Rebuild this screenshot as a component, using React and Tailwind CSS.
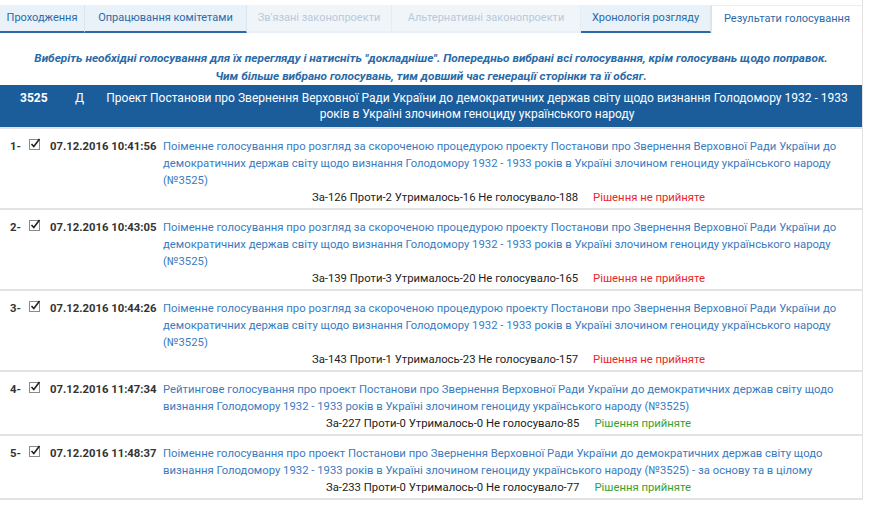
import React from "react";

const tabs = [
  { t: "Проходження", kind: "link", w: 85 },
  { t: "Опрацювання комітетами", kind: "link", w: 162 },
  { t: "Зв'язані законопроекти", kind: "disabled", w: 145 },
  { t: "Альтернативні законопроекти", kind: "disabled", w: 189 },
  { t: "Хронологія розгляду", kind: "link", w: 130 },
  { t: "Результати голосування", kind: "active", w: 151 },
];

const rows = [
  {
    n: "1-",
    d: "07.12.2016 10:41:56",
    text: "Поіменне голосування про розгляд за скороченою процедурою проекту Постанови про Звернення Верховної Ради України до демократичних держав світу щодо визнання Голодомору 1932 - 1933 років в Україні злочином геноциду українського народу (№3525)",
    res: "За-126 Проти-2 Утрималось-16 Не голосувало-188",
    ok: false,
  },
  {
    n: "2-",
    d: "07.12.2016 10:43:05",
    text: "Поіменне голосування про розгляд за скороченою процедурою проекту Постанови про Звернення Верховної Ради України до демократичних держав світу щодо визнання Голодомору 1932 - 1933 років в Україні злочином геноциду українського народу (№3525)",
    res: "За-139 Проти-3 Утрималось-20 Не голосувало-165",
    ok: false,
  },
  {
    n: "3-",
    d: "07.12.2016 10:44:26",
    text: "Поіменне голосування про розгляд за скороченою процедурою проекту Постанови про Звернення Верховної Ради України до демократичних держав світу щодо визнання Голодомору 1932 - 1933 років в Україні злочином геноциду українського народу (№3525)",
    res: "За-143 Проти-1 Утрималось-23 Не голосувало-157",
    ok: false,
  },
  {
    n: "4-",
    d: "07.12.2016 11:47:34",
    text: "Рейтингове голосування про проект Постанови про Звернення Верховної Ради України до демократичних держав світу щодо визнання Голодомору 1932 - 1933 років в Україні злочином геноциду українського народу (№3525)",
    res: "За-227 Проти-0 Утрималось-0 Не голосувало-85",
    ok: true,
  },
  {
    n: "5-",
    d: "07.12.2016 11:48:37",
    text: "Поіменне голосування про проект Постанови про Звернення Верховної Ради України до демократичних держав світу щодо визнання Голодомору 1932 - 1933 років в Україні злочином геноциду українського народу (№3525) - за основу та в цілому",
    res: "За-233 Проти-0 Утрималось-0 Не голосувало-77",
    ok: true,
  },
];

function Check() {
  return (
    <svg width="12" height="12" viewBox="0 0 12 12" className="shrink-0">
      <rect x="0.5" y="1.5" width="10" height="10" fill="#fff" stroke="#8a8a8a" />
      <path d="M2.5 6 L4.8 8.6 L10.5 1" fill="none" stroke="#222" strokeWidth="1.6" />
    </svg>
  );
}

function tabClass(kind) {
  if (kind === "active")
    return "flex items-center justify-center bg-white text-[#2a6aa8] border-l border-[#e3e3e3] border-t border-t-[#eeeeee]";
  if (kind === "disabled")
    return "flex items-center justify-center bg-[#f0f5fa] text-[#b9c9d9] border-r border-[#e4ecf4] border-b-2 border-b-[#e8eff6]";
  return "flex items-center justify-center bg-[#e9f1f9] text-[#2a6aa8] border-r border-[#d9e5f0] border-b-2 border-b-[#2a6aa8]";
}

export default function App() {
  return (
    <div className="w-[869px] h-[506px] overflow-hidden bg-white font-['Roboto','Liberation_Sans',sans-serif] text-[11.3px] text-[#333]">
      <div className="w-[863px] border-r border-[#e3e3e3] pt-[5px]">
        <div className="flex h-[28px] text-[11px]">
          {tabs.map((t, i) => (
            <div key={i} className={tabClass(t.kind)} style={{ width: t.w }}>
              {t.t}
            </div>
          ))}
        </div>
        <div className="pt-[16px] text-center text-[11.8px] font-bold italic text-[#2a6aa8] leading-[18px]">
          <div>Виберіть необхідні голосування для їх перегляду і натисніть "докладніше". Попередньо вибрані всі голосування, крім голосувань щодо поправок.</div>
          <div>Чим більше вибрано голосувань, тим довший час генерації сторінки та її обсяг.</div>
        </div>
        <div className="flex bg-[#1b5d9b] text-white text-[12px] leading-[16px] py-[5px] border-b-2 border-[#e3e3e3]">
          <div className="w-[65px] pl-[20px] font-bold">3525</div>
          <div className="w-[35px] pl-[10px]">Д</div>
          <div className="flex-1 text-center pr-[8px]">
            Проект Постанови про Звернення Верховної Ради України до демократичних держав світу щодо визнання Голодомору 1932 - 1933 років в Україні злочином геноциду українського народу
          </div>
        </div>
        {rows.map((r, i) => (
          <div key={i} className="flex pt-[9px] pb-[2px] border-b-2 border-[#e3e3e3] leading-[17px]">
            <div className="w-[163px] shrink-0 flex items-start font-bold text-[#333]">
              <span className="w-[29px] pl-[10px]">{r.n}</span>
              <span className="w-[21px]"><Check /></span>
              <span className="whitespace-nowrap">{r.d}</span>
            </div>
            <div className="flex-1 pr-[8px]">
              <div className="text-[#3a7bbf]">{r.text}</div>
              <div className="text-center text-[#222]">
                {r.res}
                <span className={"ml-[15px] " + (r.ok ? "text-[#3aa02c]" : "text-[#e8272b]")}>
                  {r.ok ? "Рішення прийняте" : "Рішення не прийняте"}
                </span>
              </div>
            </div>
          </div>
        ))}
      </div>
    </div>
  );
}
